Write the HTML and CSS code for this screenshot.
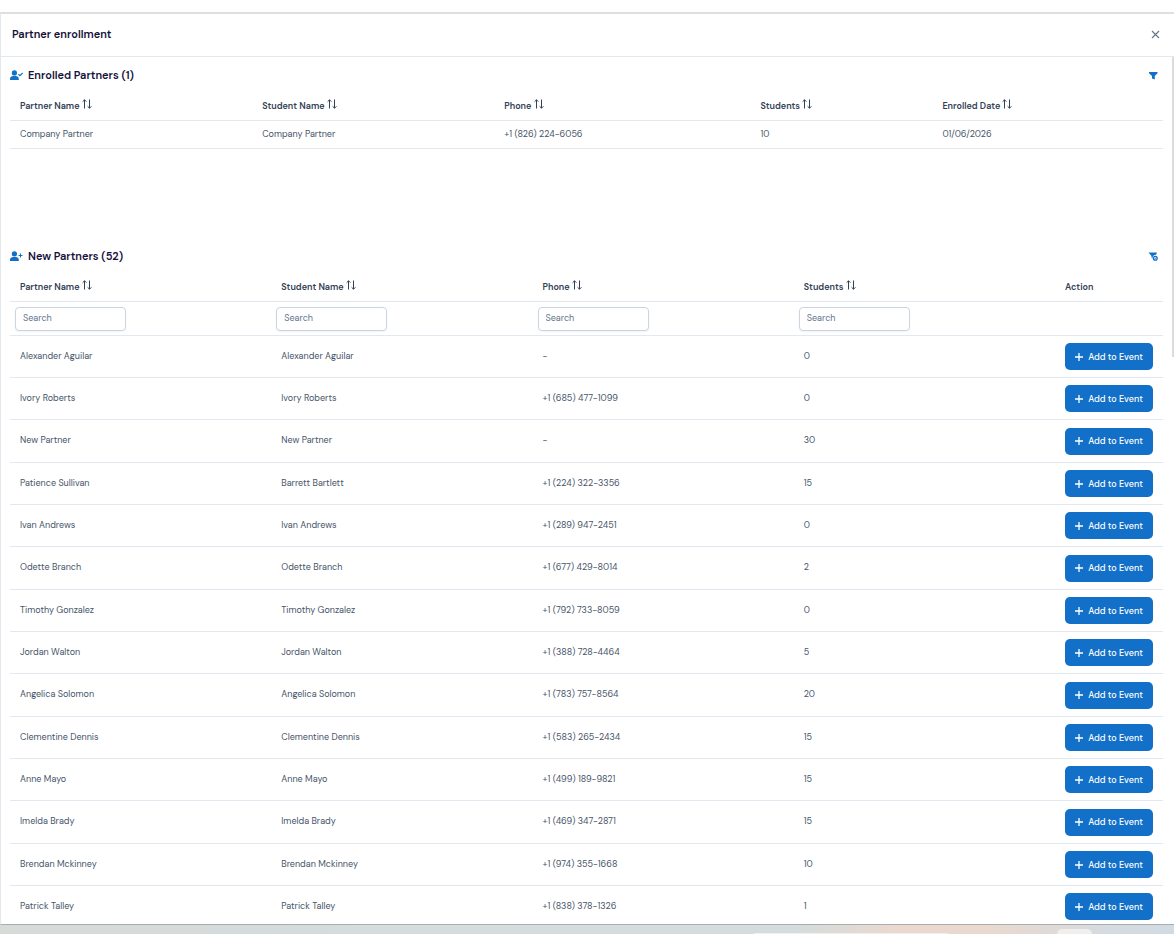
FILE: index.html
```html
<!DOCTYPE html>
<html lang="en">
<head>
    <meta charset="UTF-8">
    <meta name="viewport" content="width=device-width, initial-scale=1.0">
    <title>Partner enrollment</title>
    <link rel="stylesheet" href="styles.css">
</head>
<body>
    <!-- Shared icons -->
    <svg class="sprite" aria-hidden="true">
        <symbol id="sort" viewBox="0 0 10 10">
            <path d="M2.5 9.5V.8M.6 2.7 2.5.8l1.9 1.9M7.5.5v8.7M5.6 7.3l1.9 1.9 1.9-1.9" fill="none" stroke="currentColor"/>
        </symbol>
        <symbol id="user" viewBox="0 0 13 11">
            <circle cx="4.4" cy="2.9" r="2.6"/>
            <path d="M0 10V8.8C0 7 1.5 6 3.2 6h2.4c1.8 0 3.2 1 3.2 2.8V10z"/>
        </symbol>
    </svg>

    <div class="panel">
        <header class="panel-header">
            <h1>Partner enrollment</h1>
            <button class="icon-button" aria-label="Close">
                <svg width="9" height="9" viewBox="0 0 9 9"><path d="M1 1l7 7M8 1L1 8" fill="none" stroke="#64748b" stroke-width="1.1"/></svg>
            </button>
        </header>

        <main class="panel-body">
            <section class="enrolled">
                <div class="section-title">
                    <h2>
                        <svg class="title-icon" viewBox="0 0 13 11"><use href="#user"/><path d="M8.4 4.2l1.5 1.5L12.7 3" fill="none" stroke="currentColor" stroke-width="1.2"/></svg>
                        Enrolled Partners (1)
                    </h2>
                    <button class="icon-button" aria-label="Show filters">
                        <svg class="filter-icon" viewBox="0 0 10 9"><path d="M1 1h8.5v1.2L6.800 5v3.5L4 7.500V5L1 2.200z"/></svg>
                    </button>
                </div>
                <table class="enrolled-table">
                    <thead>
                        <tr>
                            <th>Partner Name <svg class="sort"><use href="#sort"/></svg></th>
                            <th>Student Name <svg class="sort"><use href="#sort"/></svg></th>
                            <th>Phone <svg class="sort"><use href="#sort"/></svg></th>
                            <th>Students <svg class="sort"><use href="#sort"/></svg></th>
                            <th>Enrolled Date <svg class="sort"><use href="#sort"/></svg></th>
                        </tr>
                    </thead>
                    <tbody>
                        <tr>
                            <td>Company Partner</td>
                            <td>Company Partner</td>
                            <td>+1 (826) 224-6056</td>
                            <td>10</td>
                            <td>01/06/2026</td>
                        </tr>
                    </tbody>
                </table>
            </section>

            <section>
                <div class="section-title">
                    <h2>
                        <svg class="title-icon" viewBox="0 0 13 11"><use href="#user"/><path d="M8.5 4.5h4M10.5 2.5v4" fill="none" stroke="currentColor"/></svg>
                        New Partners (52)
                    </h2>
                    <button class="icon-button" aria-label="Clear filters">
                        <svg class="filter-icon" viewBox="0 0 10 9"><path d="M.5.5H9L8 2.8C5.5 3 4.3 4.5 4.5 6.5l-1-1V4z"/><circle cx="7.3" cy="6.3" r="1.9" fill="#fff" stroke="currentColor" stroke-width="1.3"/><path d="M6.3 7.3l2-2" stroke="currentColor"/></svg>
                    </button>
                </div>
                <table class="new-table">
                    <thead>
                        <tr>
                            <th>Partner Name <svg class="sort"><use href="#sort"/></svg></th>
                            <th>Student Name <svg class="sort"><use href="#sort"/></svg></th>
                            <th>Phone <svg class="sort"><use href="#sort"/></svg></th>
                            <th>Students <svg class="sort"><use href="#sort"/></svg></th>
                            <th class="action">Action</th>
                        </tr>
                        <tr class="filters">
                            <td><input type="text" placeholder="Search" aria-label="Partner name"></td>
                            <td><input type="text" placeholder="Search" aria-label="Student name"></td>
                            <td><input type="text" placeholder="Search" aria-label="Phone"></td>
                            <td><input type="text" placeholder="Search" aria-label="Students"></td>
                            <td></td>
                        </tr>
                    </thead>
                    <tbody id="newPartners"></tbody>
                </table>
            </section>
            <div class="scroll-thumb"></div>
        </main>
    </div>

    <div class="backdrop">
        <div class="backdrop-bar"></div>
        <div class="backdrop-tab"></div>
    </div>

    <script src="script.js"></script>
</body>
</html>
```

FILE: styles.css
```css
* {
    box-sizing: border-box;
}
body {
    margin: 0;
    height: 100vh;
    padding-top: 12px;
    display: flex;
    flex-direction: column;
    overflow: hidden;
    background-color: #fff;
    color: #475569;
    font-family: "DM Sans", Inter, "Open Sans", sans-serif;
    font-size: 9px;
}
h1, h2 {
    margin: 0;
    font-size: 11px;
    line-height: 16px;
    font-weight: 600;
    color: #14113a;
}
button, input {
    font-family: inherit;
    font-size: 9px;
}
.sprite {
    display: none;
}
.panel {
    flex: 1;
    min-height: 0;
    display: flex;
    flex-direction: column;
    border-top: 2px solid #dce0e1;
    border-left: 1px solid #e2e8f0;
    border-bottom: 1px solid #a9afb1;
}
.panel-header {
    display: flex;
    flex-shrink: 0;
    justify-content: space-between;
    align-items: center;
    height: 43px;
    padding: 0 14px 2px 11px;
    border-bottom: 1px solid #e2e8f0;
}
.icon-button {
    display: flex;
    padding: 0;
    border: none;
    background: none;
    color: #1370c8;
    cursor: pointer;
}
.panel-body {
    position: relative;
    flex: 1;
    min-height: 0;
    overflow: hidden;
    padding: 8px 11px 0 9px;
}
.scroll-thumb {
    position: absolute;
    top: 0;
    right: 0;
    width: 2px;
    height: 300px;
    background-color: #dcdcdc;
}
.enrolled {
    min-height: 181px;
}
.section-title {
    display: flex;
    justify-content: space-between;
    align-items: center;
    height: 22px;
    padding: 0 5px 2px 0;
}
.section-title h2 {
    display: flex;
    align-items: center;
    gap: 5px;
}
.title-icon {
    width: 13px;
    height: 11px;
    color: #1370c8;
    fill: currentColor;
}
.filter-icon {
    width: 10px;
    height: 9px;
    fill: currentColor;
}

/* Tables */
table {
    width: 100%;
    table-layout: fixed;
    border-collapse: separate;
    border-spacing: 0;
}
th, td {
    padding: 0 10px;
    text-align: left;
    white-space: nowrap;
    line-height: 12px;
    border-bottom: 1px solid #e2e8f0;
}
th {
    height: 34px;
    padding-top: 4px;
    font-weight: 600;
    color: #334155;
}
td {
    height: 28px;
    padding-bottom: 2px;
}
.sort {
    width: 10px;
    height: 10px;
}
.enrolled-table th:nth-child(-n+2) {
    width: 21%;
}
.enrolled-table th:nth-child(4) {
    width: 182px;
}
.enrolled-table th:nth-child(5) {
    width: 20%;
}
.new-table .action {
    width: 108px;
}
.filters td {
    height: 34px;
    padding: 0 5px;
}
.filters input {
    display: block;
    width: 111px;
    height: 24px;
    padding: 0 7px 2px;
    color: #334155;
    border: 1px solid #cbd5e1;
    border-radius: 4px;
    box-shadow: 0 1px 2px rgba(18, 18, 23, 0.05);
}
.filters input::placeholder {
    color: #64748b;
}
.new-table tbody td {
    height: 42px;
}
.new-table tbody tr:nth-child(3n) td {
    height: 43px;
}
.new-table tbody td:last-child {
    padding-bottom: 0;
}
.add-button {
    display: flex;
    justify-content: center;
    align-items: center;
    gap: 5px;
    width: 88px;
    height: 27px;
    padding: 0;
    border: none;
    border-radius: 5px;
    background-color: #1370c8;
    color: #fff;
    font-weight: 500;
    cursor: pointer;
}
.add-button:hover {
    background-color: #0f5fab;
}

/* Strip under the panel */
.backdrop {
    position: relative;
    flex-shrink: 0;
    height: 9px;
    overflow: hidden;
    background: linear-gradient(90deg, #d8dad8, #d4dcdc 30%, #d4dcdd 68%, #ead9ce 76%, #ead9ce 84%, #d6dbdf 94%, #d0dbe2);
}
.backdrop-bar, .backdrop-tab {
    position: absolute;
    top: 8px;
    left: 64%;
    width: 17%;
    height: 20px;
    border-radius: 5px;
    background-color: #f1efed;
}
.backdrop-tab {
    top: 4px;
    left: 90%;
    width: 3%;
}
```

FILE: script.js
```javascript
// name, student, phone, students
const partners = [
    ['Alexander Aguilar', 'Alexander Aguilar', '-', 0],
    ['Ivory Roberts', 'Ivory Roberts', '+1 (685) 477-1099', 0],
    ['New Partner', 'New Partner', '-', 30],
    ['Patience Sullivan', 'Barrett Bartlett', '+1 (224) 322-3356', 15],
    ['Ivan Andrews', 'Ivan Andrews', '+1 (289) 947-2451', 0],
    ['Odette Branch', 'Odette Branch', '+1 (677) 429-8014', 2],
    ['Timothy Gonzalez', 'Timothy Gonzalez', '+1 (792) 733-8059', 0],
    ['Jordan Walton', 'Jordan Walton', '+1 (388) 728-4464', 5],
    ['Angelica Solomon', 'Angelica Solomon', '+1 (783) 757-8564', 20],
    ['Clementine Dennis', 'Clementine Dennis', '+1 (583) 265-2434', 15],
    ['Anne Mayo', 'Anne Mayo', '+1 (499) 189-9821', 15],
    ['Imelda Brady', 'Imelda Brady', '+1 (469) 347-2871', 15],
    ['Brendan Mckinney', 'Brendan Mckinney', '+1 (974) 355-1668', 10],
    ['Patrick Talley', 'Patrick Talley', '+1 (838) 378-1326', 1]
];

const addButton = `<button class="add-button">
    <svg width="8" height="8" viewBox="0 0 8 8"><path d="M4 0v8M0 4h8" stroke="#fff" stroke-width="1.3"/></svg>
    Add to Event
</button>`;

document.getElementById('newPartners').innerHTML = partners.map(function (row) {
    return '<tr>' + row.map(value => `<td>${value}</td>`).join('') + `<td>${addButton}</td></tr>`;
}).join('');
```
